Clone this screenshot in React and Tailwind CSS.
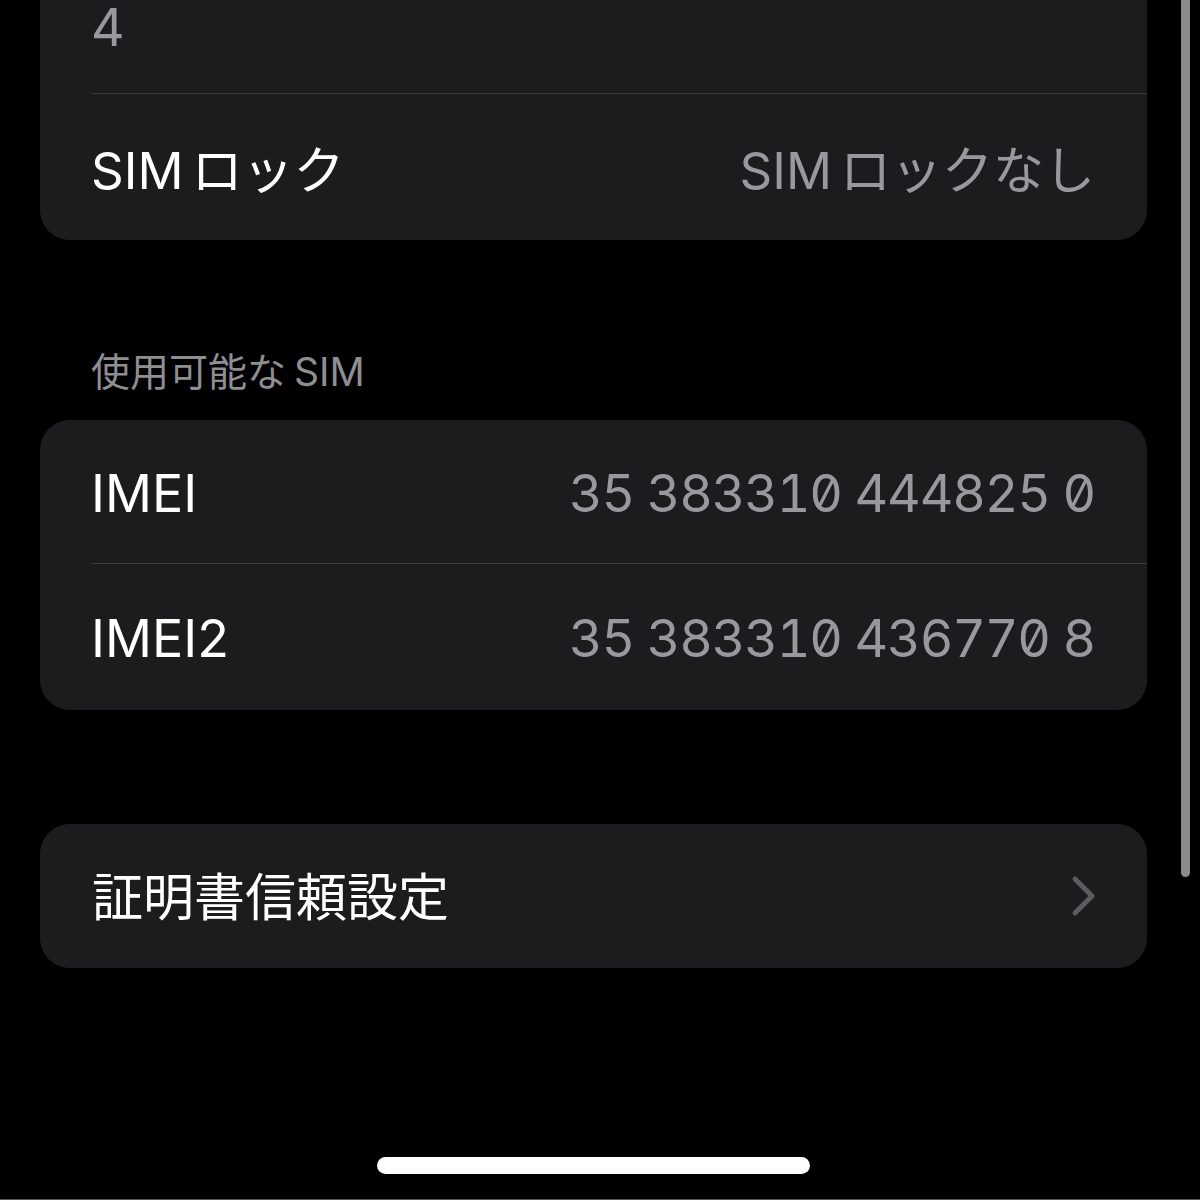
export default function App() {
  return (
    <div className="relative w-[1200px] h-[1200px] bg-black overflow-hidden border-b border-[#5a5a5a] font-['Inter','Noto_Sans_CJK_JP',sans-serif]">
      {/* Card 1 (top cut off) */}
      <div className="ml-[40px] w-[1107px] bg-[#1c1c1e] rounded-b-[30px] pl-[51px]">
        <div className="h-[94px] border-b border-[#3a3a3e] pr-[52px] pt-[2px] text-[52px] leading-[52px] text-[#98989e]">
          4
        </div>
        <div className="h-[146px] pr-[52px] pt-[8px] flex items-center justify-between text-[51px]">
          <span className="text-white">
            <span className="mr-[8px]">SIM</span>ロック
          </span>
          <span className="text-[#98989e]">
            <span className="mr-[8px]">SIM</span>ロックなし
          </span>
        </div>
      </div>

      {/* Section header */}
      <div className="h-[180px] flex items-end pl-[91px] pb-[29px]">
        <span className="text-[39px] leading-[39px] text-[#8e8e93]">
          使用可能な<span className="ml-[8px]">SIM</span>
        </span>
      </div>

      {/* Card 2 */}
      <div className="ml-[40px] w-[1107px] bg-[#1c1c1e] rounded-[30px] pl-[51px]">
        <div className="h-[144px] border-b border-[#3a3a3e] pr-[52px] pt-[4px] flex items-center justify-between text-[52px]">
          <span className="text-white">IMEI</span>
          <span className="text-[#98989e] tracking-[-1.2px] [font-feature-settings:'tnum','zero']">35 383310 444825 0</span>
        </div>
        <div className="h-[146px] pr-[52px] pt-[4px] flex items-center justify-between text-[52px]">
          <span className="text-white">IMEI2</span>
          <span className="text-[#98989e] tracking-[-1.2px] [font-feature-settings:'tnum','zero']">35 383310 436770 8</span>
        </div>
      </div>

      {/* Card 3 */}
      <div className="mt-[114px] ml-[40px] w-[1107px] h-[144px] bg-[#1c1c1e] rounded-[30px] pl-[52px] pr-[52px] pt-[4px] flex items-center justify-between">
        <span className="text-white text-[51px]">証明書信頼設定</span>
        <svg width="26" height="42" viewBox="0 0 26 42" className="mr-[-2px] mb-[4px]">
          <path d="M4 4 L21 21 L4 38" fill="none" stroke="#5b5b60" strokeWidth="5" strokeLinecap="round" strokeLinejoin="round" />
        </svg>
      </div>

      {/* Scrollbar */}
      <div className="absolute left-[1181px] top-0 w-[9px] h-[877px] bg-[#8c8c8c] rounded-b-full" />

      {/* Home indicator */}
      <div className="absolute left-[377px] top-[1157px] w-[433px] h-[17px] bg-white rounded-full" />
    </div>
  );
}
